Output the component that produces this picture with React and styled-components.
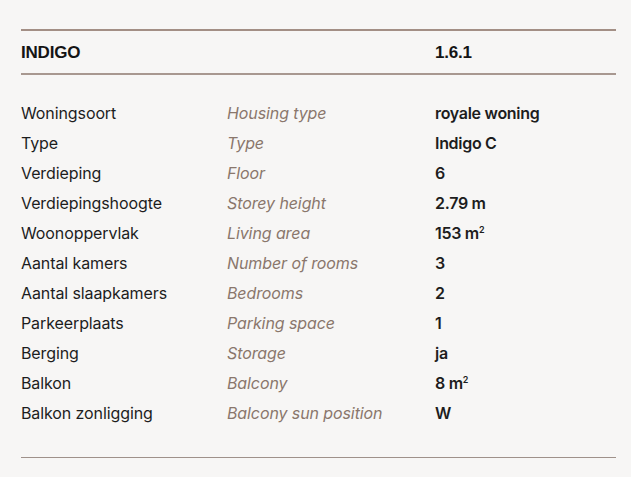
import React from 'react'
import styled, { createGlobalStyle } from 'styled-components'

const GlobalStyle = createGlobalStyle`
  html, body {
    margin: 0;
    padding: 0;
    background: #f7f6f5;
  }
  body {
    font-family: 'Inter', 'Liberation Sans', sans-serif;
    color: #1b1b1b;
  }
`

const Sheet = styled.div`
  width: 631px;
  height: 477px;
  padding: 29px 15px 0 21px;
  box-sizing: border-box;
`

const Header = styled.div`
  display: grid;
  grid-template-columns: 414px 1fr;
  align-items: center;
  height: 46px;
  padding-top: 2px;
  box-sizing: border-box;
  border-top: 2px solid #a38f85;
  border-bottom: 2px solid #a89890;
  font-family: 'Liberation Sans', 'Arial', sans-serif;
  font-weight: 700;
  font-size: 17px;
  letter-spacing: -0.2px;
  color: #141414;
`

const Table = styled.div`
  display: grid;
  grid-template-columns: 206px 208px 1fr;
  grid-auto-rows: 30px;
  align-items: center;
  padding: 23px 0 29px;
  border-bottom: 1px solid #9f918a;
  font-size: 16px;
`

const Cell = styled.div`
  white-space: nowrap;
  color: ${p => (p.$kind === 'en' ? '#8a776c' : '#1d1d1d')};
  font-style: ${p => (p.$kind === 'en' ? 'italic' : 'normal')};
  font-weight: ${p => (p.$kind === 'value' ? 600 : 400)};
  letter-spacing: ${p => (p.$kind === 'value' ? '-0.3px' : '-0.1px')};
`

const Sup = styled.sup`
  font-size: 9px;
  vertical-align: 6px;
  line-height: 0;
`

const rows = [
  ['Woningsoort', 'Housing type', 'royale woning'],
  ['Type', 'Type', 'Indigo C'],
  ['Verdieping', 'Floor', '6'],
  ['Verdiepingshoogte', 'Storey height', '2.79 m'],
  ['Woonoppervlak', 'Living area', <>153 m<Sup>2</Sup></>],
  ['Aantal kamers', 'Number of rooms', '3'],
  ['Aantal slaapkamers', 'Bedrooms', '2'],
  ['Parkeerplaats', 'Parking space', '1'],
  ['Berging', 'Storage', 'ja'],
  ['Balkon', 'Balcony', <>8 m<Sup>2</Sup></>],
  ['Balkon zonligging', 'Balcony sun position', 'W'],
]

export default function App() {
  return (
    <Sheet>
      <GlobalStyle />
      <Header>
        <span>INDIGO</span>
        <span>1.6.1</span>
      </Header>
      <Table>
        {rows.map(([nl, en, value]) => (
          <React.Fragment key={nl}>
            <Cell>{nl}</Cell>
            <Cell $kind="en">{en}</Cell>
            <Cell $kind="value">{value}</Cell>
          </React.Fragment>
        ))}
      </Table>
    </Sheet>
  )
}
